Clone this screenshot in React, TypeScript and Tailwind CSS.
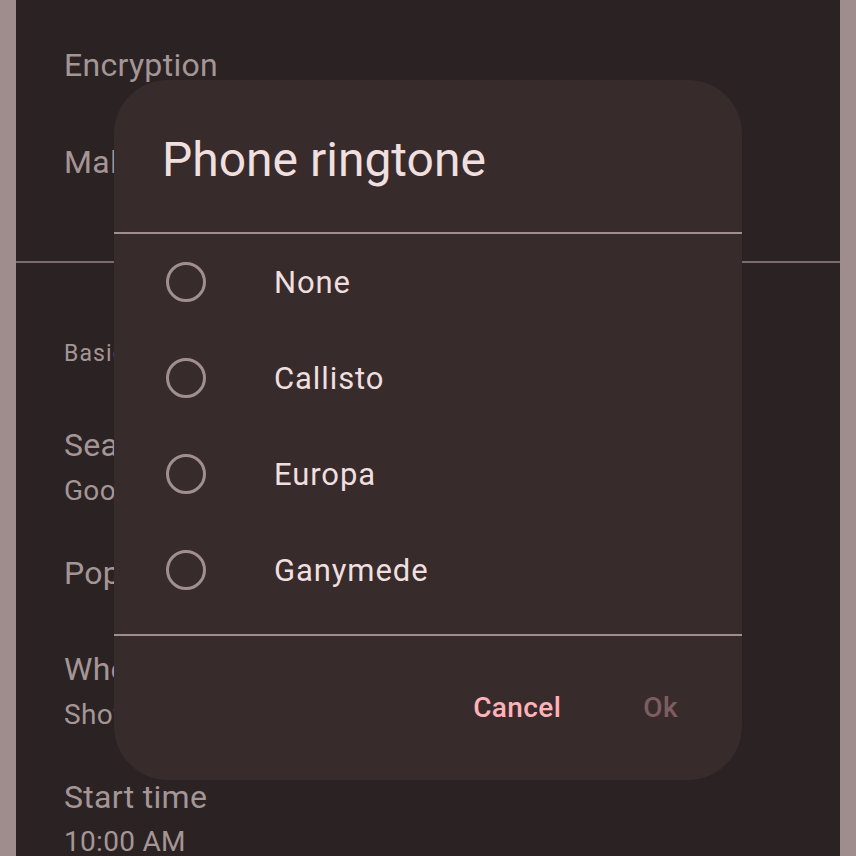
import React, { useState } from "react";

const ringtones = ["None", "Callisto", "Europa", "Ganymede"];

function Radio({ checked }: { checked: boolean }) {
  return (
    <span className="flex h-[40px] w-[40px] items-center justify-center rounded-full border-[3px] border-[#a08f90]">
      {checked && <span className="h-[20px] w-[20px] rounded-full bg-[#ffb2b8]" />}
    </span>
  );
}

const App: React.FC = () => {
  const [selected, setSelected] = useState<string | null>(null);

  return (
    <div className="relative h-[856px] w-[856px] overflow-hidden bg-[#9f8d8e] font-['Roboto',sans-serif]">
      <div className="mx-[16px] h-full bg-[#2b2224] px-[48px] tracking-[0.3px] text-[#a59696]">
        <div className="pt-[45px] text-[32px] leading-[40px]">Encryption</div>
        <div className="mt-[57px] text-[32px] leading-[40px]">Malware scan</div>
        <div className="-mx-[48px] mt-[79px] h-[2px] bg-[#7b6b6c]" />
        <div className="mt-[77px] text-[23px] leading-[28px] tracking-[1.1px]">Basics</div>
        <div className="mt-[57px] text-[32px] leading-[40px]">Search engine</div>
        <div className="mt-[9px] text-[28px] leading-[34px]">Google</div>
        <div className="mt-[45px] text-[32px] leading-[40px]">Pop-ups</div>
        <div className="mt-[56px] text-[32px] leading-[40px]">When</div>
        <div className="mt-[9px] text-[28px] leading-[34px]">Show</div>
        <div className="mt-[45px] text-[32px] leading-[40px]">Start time</div>
        <div className="mt-[8px] text-[28px] leading-[34px]">10:00 AM</div>
      </div>

      <div className="absolute left-[114px] top-[80px] flex h-[700px] w-[628px] flex-col rounded-[54px] bg-[#382b2c]">
        <h1 className="pl-[48px] pt-[52px] text-[48px] leading-[56px] text-[#f0dfdf]">Phone ringtone</h1>
        <div className="mt-[44px] h-[2px] bg-[#a08d8e]" />
        <div className="flex flex-col pb-[16px]">
          {ringtones.map((name) => (
            <button
              key={name}
              onClick={() => setSelected(name)}
              className="flex h-[96px] items-center pl-[52px] text-left"
            >
              <Radio checked={selected === name} />
              <span className="ml-[68px] pt-[2px] text-[31px] leading-[40px] tracking-[0.9px] text-[#f0dfdf]">{name}</span>
            </button>
          ))}
        </div>
        <div className="h-[2px] bg-[#a08d8e]" />
        <div className="flex flex-1 items-center justify-end gap-[82px] pr-[64px]">
          <button className="text-[28px] font-medium leading-[36px] tracking-[0.4px] text-[#ffb2b8]">Cancel</button>
          <button disabled={selected === null} className="text-[28px] font-medium leading-[36px] tracking-[0.4px] text-[#7d5d5f]">
            Ok
          </button>
        </div>
      </div>
    </div>
  );
};

export default App;
